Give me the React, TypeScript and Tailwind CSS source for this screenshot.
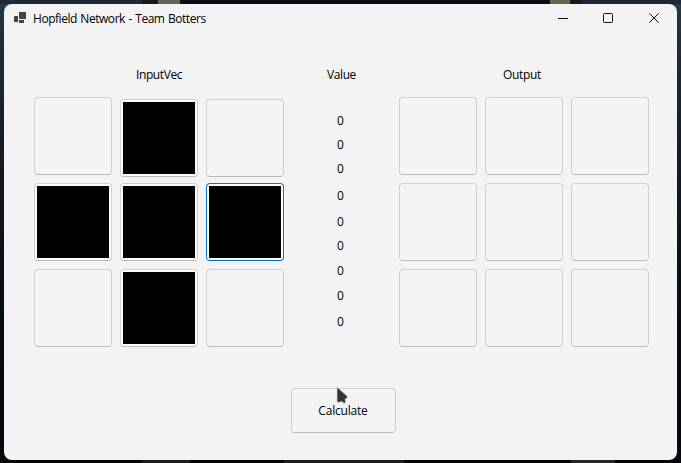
import type { ReactNode } from "react";

type TileProps = { filled?: boolean; focused?: boolean; lowered?: boolean };

const INPUT: TileProps[] = [
  {},
  { filled: true, lowered: true },
  { lowered: true },
  { filled: true },
  { filled: true },
  { filled: true, focused: true },
  {},
  { filled: true },
  {},
];

const VALUE_GAPS = ["mt-0", "mt-2", "mt-2", "mt-[11px]", "mt-[10px]", "mt-2", "mt-[9px]", "mt-[9px]", "mt-[10px]"];

function Tile({ filled, focused, lowered }: TileProps) {
  const border = focused
    ? "border-[#0078d4] border-b-[#0067b8]"
    : "border-[#d0d0d0] border-b-[#bababa]";
  return (
    <button
      className={`block size-[78px] rounded-[4px] border p-[2px] ${border} ${lowered ? "mt-[2px]" : ""} ${
        filled ? "bg-[#fbfbfb]" : "bg-[#f4f4f4]"
      }`}
    >
      {filled && <span className="block size-[72px] bg-black" />}
    </button>
  );
}

function Grid({ tiles }: { tiles: TileProps[] }) {
  return (
    <div className="grid grid-cols-[78px_78px_78px] grid-rows-[78px_78px_78px] gap-2">
      {tiles.map((t, i) => (
        <Tile key={i} {...t} />
      ))}
    </div>
  );
}

function Heading({ children, className }: { children: ReactNode; className: string }) {
  return <div className={`h-4 leading-4 whitespace-nowrap ${className}`}>{children}</div>;
}

function TitleBar() {
  return (
    <header className="flex h-[30px] items-center pl-[10px]">
      <svg width="12" height="11" viewBox="0 0 12 11" className="-mt-[3px]" fill="#454545" shapeRendering="crispEdges">
        <rect x="5" y="0" width="7" height="7" />
        <rect x="0" y="4" width="4" height="6" />
        <rect x="5" y="8" width="5" height="3" />
      </svg>
      <span className="ml-[7px] flex-1 text-[12px] leading-4 tracking-[-0.46px] [word-spacing:0.8px]">
        Hopfield Network - Team Botters
      </span>
      <svg width="102" height="12" viewBox="0 0 102 12" className="mr-[17px] -mt-[2px]" fill="none" stroke="#111">
        <path d="M0 6.5h10" shapeRendering="crispEdges" />
        <rect x="45.5" y="1.5" width="9" height="9" rx="1" />
        <path d="M91.3 1.3l9.4 9.4M100.7 1.3l-9.4 9.4" />
      </svg>
    </header>
  );
}

export default function App() {
  return (
    <div className="h-[463px] w-[681px] overflow-hidden bg-[linear-gradient(180deg,#263945_0px,#1c2b35_60px,#101a22_180px,#080b12_320px,#080910_463px)] font-['Open_Sans','Noto_Sans',sans-serif] text-[12px] text-black">
      <div className="flex h-1 bg-[#1d2a35]">
        <div className="ml-[142px] w-4 bg-[#17191b]" />
        <div className="w-[22px] bg-[#5f6657]" />
        <div className="w-[370px] bg-[#0b0d15]" />
        <div className="w-5 bg-[#626650]" />
        <div className="w-3 bg-[#17191b]" />
      </div>
      <div className="ml-1 h-[456px] w-[673px] rounded-[8px] bg-[#f3f3f3]">
        <TitleBar />
        <main className="pt-[33px] pl-[30px]">
          <div className="flex">
            <section className="w-[250px]">
              <Heading className="pl-[102px] tracking-[-0.4px]">InputVec</Heading>
              <div className="pt-[14px]">
                <Grid tiles={INPUT} />
              </div>
            </section>
            <section className="w-[115px]">
              <Heading className="pl-[43px] tracking-[-0.4px]">Value</Heading>
              <div className="pt-[30px] pl-[53px]">
                {VALUE_GAPS.map((gap, i) => (
                  <div key={i} className={`h-4 leading-4 ${gap}`}>
                    0
                  </div>
                ))}
              </div>
            </section>
            <section className="w-[250px]">
              <Heading className="pl-[104px] tracking-[-0.35px]">Output</Heading>
              <div className="pt-[14px]">
                <Grid tiles={Array.from({ length: 9 }, () => ({}))} />
              </div>
            </section>
          </div>
          <div className="relative mt-[41px] ml-[257px] w-[105px]">
            <button className="block h-[45px] w-[105px] rounded-[4px] border border-[#d0d0d0] border-b-[#bababa] bg-[#f4f4f4] pr-[1px] tracking-[-0.2px]">
              Calculate
            </button>
            <svg width="13" height="18" viewBox="0 0 13 18" className="absolute top-[-2px] left-[45px]">
              <path d="M1 1v15.5l3.4-.5 1.6-.6 2 2 1.7-1.2-.6-3 2.9-2.2z" fill="#353535" stroke="#d8d8d8" strokeWidth=".6" />
            </svg>
          </div>
        </main>
      </div>
      <div className="flex h-[3px] bg-[#05060b]">
        <div className="ml-[142px] w-[48px] bg-[#1b1d1b]" />
        <div className="ml-[94px] w-[120px] bg-[#1c211c]" />
        <div className="ml-[167px] w-[44px] bg-[#262722]" />
      </div>
    </div>
  );
}
